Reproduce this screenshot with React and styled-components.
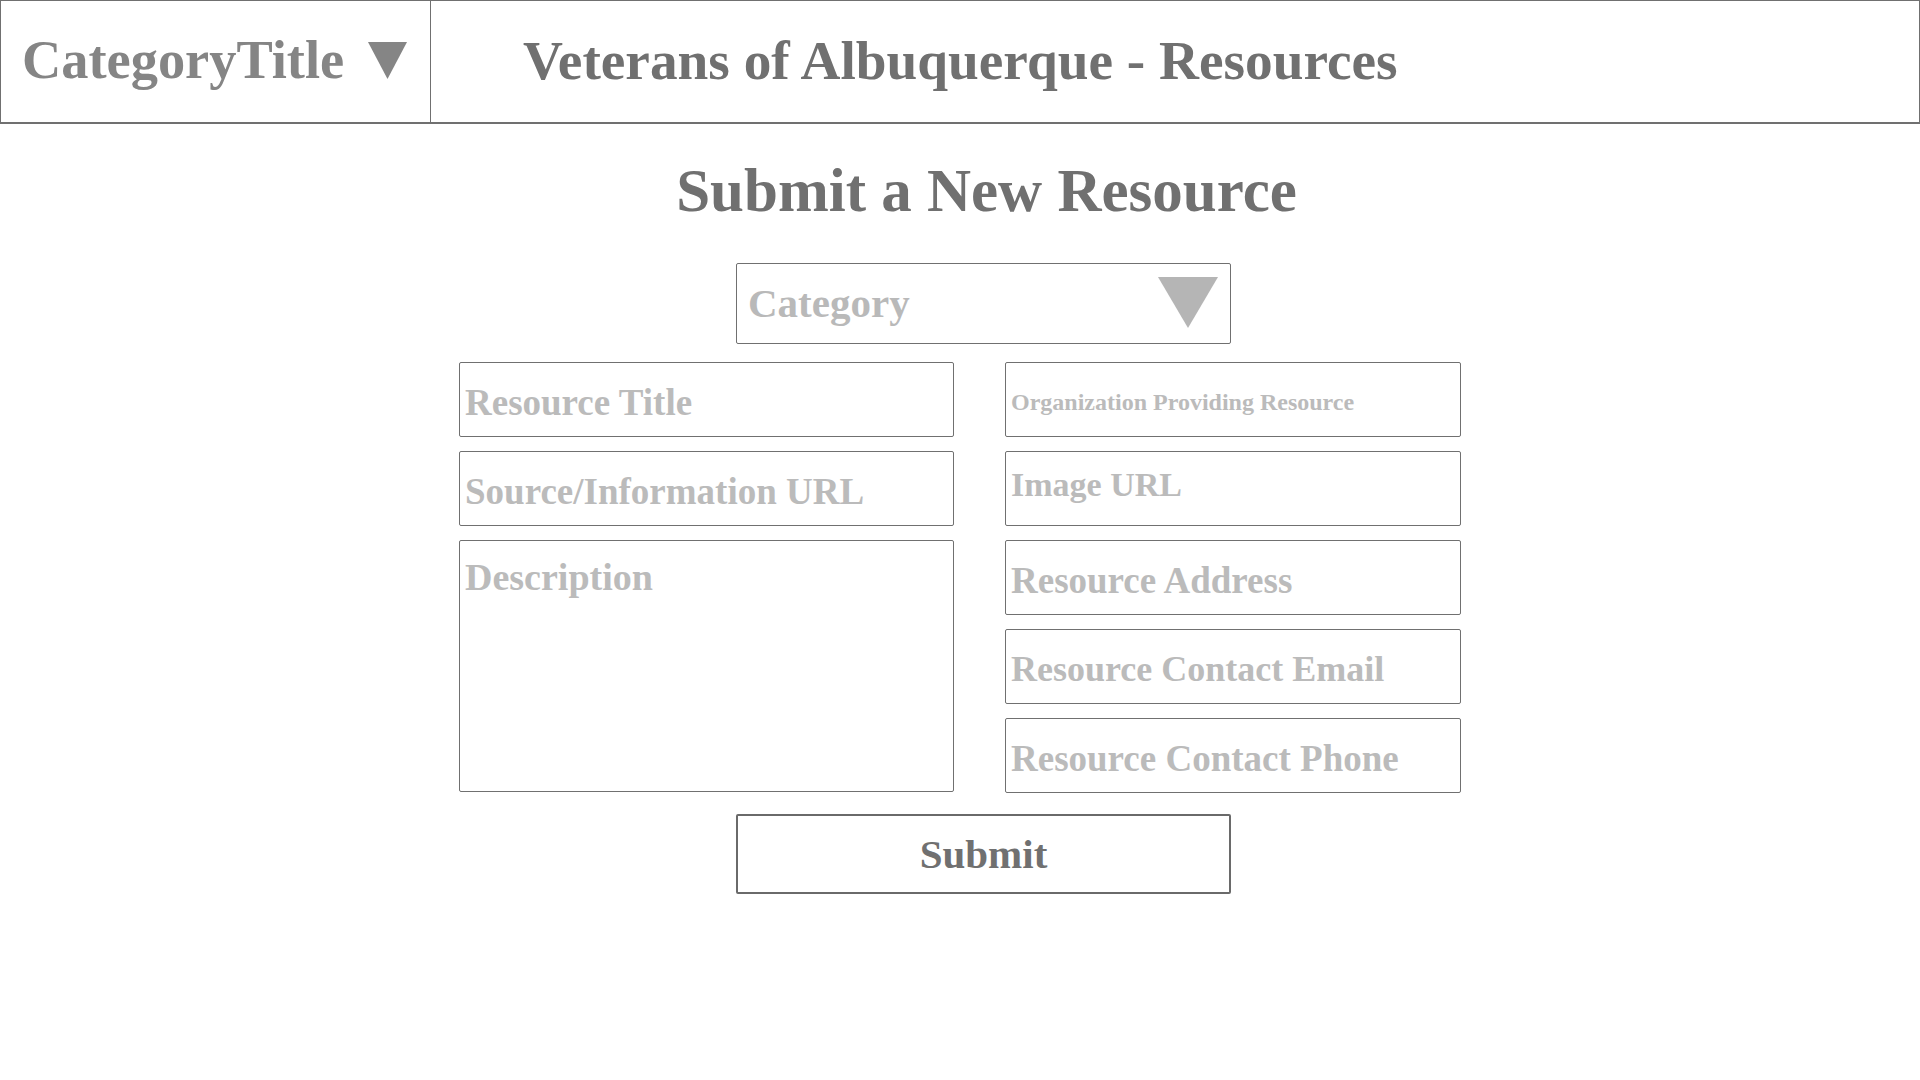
import styled, { createGlobalStyle } from "styled-components";

const GlobalStyle = createGlobalStyle`
    html, body {
        margin: 0;
        padding: 0;
        background: #ffffff;
    }
    body {
        font-family: "Liberation Serif", "Times New Roman", serif;
        font-weight: 700;
    }
    * {
        box-sizing: border-box;
    }
`

const leftFields = [
    { label: "Resource Title", size: 37 },
    { label: "Source/Information URL", size: 37 },
]

const rightFields = [
    { label: "Organization Providing Resource", size: 24 },
    { label: "Image URL", size: 34, lift: 4 },
    { label: "Resource Address", size: 37 },
    { label: "Resource Contact Email", size: 36 },
    { label: "Resource Contact Phone", size: 37 },
]

function Arrow({ width, height, color }) {
    return (
        <svg width={width} height={height} viewBox={`0 0 ${width} ${height}`}>
            <polygon points={`0,0 ${width},0 ${width / 2},${height}`} fill={color} />
        </svg>
    )
}

export default function App() {
    return (
        <Page>
            <GlobalStyle />
            <Header>
                <CategoryCell>
                    <CategoryName>CategoryTitle</CategoryName>
                    <Arrow width={39} height={37} color="#858585" />
                </CategoryCell>
                <SiteTitle>Veterans of Albuquerque - Resources</SiteTitle>
            </Header>

            <Main>
                <Title>Submit a New Resource</Title>

                <Select>
                    <SelectText>Category</SelectText>
                    <Arrow width={60} height={51} color="#b5b5b5" />
                </Select>

                <FieldGrid>
                    <Column>
                        {leftFields.map((f) => (
                            <Field key={f.label} $size={f.size}>{f.label}</Field>
                        ))}
                        <TextArea>Description</TextArea>
                    </Column>
                    <Column>
                        {rightFields.map((f) => (
                            <Field key={f.label} $size={f.size} $lift={f.lift}>{f.label}</Field>
                        ))}
                    </Column>
                </FieldGrid>

                <SubmitButton>Submit</SubmitButton>
            </Main>
        </Page>
    )
}

const Page = styled.div`
    width: 1920px;
    min-height: 1080px;
    background: #fff;
`

const Header = styled.header`
    display: flex;
    align-items: stretch;
    height: 124px;
    border: 1px solid #707070;
    border-bottom-width: 2px;
`

const CategoryCell = styled.div`
    width: 430px;
    display: flex;
    align-items: center;
    gap: 24px;
    padding-left: 21px;
    border-right: 1px solid #707070;
    padding-bottom: 2px;
`

const CategoryName = styled.span`
    font-size: 54.4px;
    color: #858585;
    line-height: 1;
`

const SiteTitle = styled.h1`
    margin: 0;
    padding-left: 92px;
    display: flex;
    align-items: center;
    font-size: 55.3px;
    font-weight: 700;
    color: #707070;
    line-height: 1;
    padding-bottom: 2px;
`

const Main = styled.main`
    width: 1002px;
    margin: 0 auto;
    padding-left: 1px;
    display: flex;
    flex-direction: column;
    align-items: flex-start;
`

const Title = styled.h2`
    margin: 32px 0 0 0;
    align-self: center;
    transform: translateX(26px);
    font-size: 61px;
    line-height: 70px;
    font-weight: 700;
    color: #707070;
`

const Select = styled.div`
    margin: 37px 0 0 276px;
    width: 495px;
    height: 81px;
    border: 1px solid #707070;
    border-radius: 2px;
    display: flex;
    align-items: flex-start;
    justify-content: space-between;
    padding: 13px 12px 0 11px;
`

const SelectText = styled.span`
    font-size: 41px;
    line-height: 52px;
    color: #b9b9b9;
`

const FieldGrid = styled.div`
    margin-top: 18px;
    margin-left: -1px;
    display: grid;
    grid-template-columns: 495px 456px;
    column-gap: 51px;
`

const Column = styled.div`
    display: flex;
    flex-direction: column;
    gap: 14px;
`

const Field = styled.div`
    height: 75px;
    border: 1px solid #707070;
    border-radius: 2px;
    display: flex;
    align-items: center;
    padding: ${(p) => (p.$lift ? 0 : 5)}px 5px ${(p) => (p.$lift ? p.$lift * 2 : 0)}px 5px;
    font-size: ${(p) => p.$size}px;
    color: #bbbbbb;
    white-space: nowrap;
`

const TextArea = styled.div`
    height: 252px;
    border: 1px solid #707070;
    border-radius: 2px;
    padding: 15px 5px;
    font-size: 38px;
    line-height: 1.15;
    color: #bbbbbb;
`

const SubmitButton = styled.button`
    margin: 21px 0 0 276px;
    width: 495px;
    height: 80px;
    border: 2px solid #6a6a6a;
    border-radius: 2px;
    background: #fff;
    font-family: "Liberation Serif", "Times New Roman", serif;
    font-weight: 700;
    font-size: 41px;
    color: #707070;
    padding: 0;
    cursor: pointer;
`
